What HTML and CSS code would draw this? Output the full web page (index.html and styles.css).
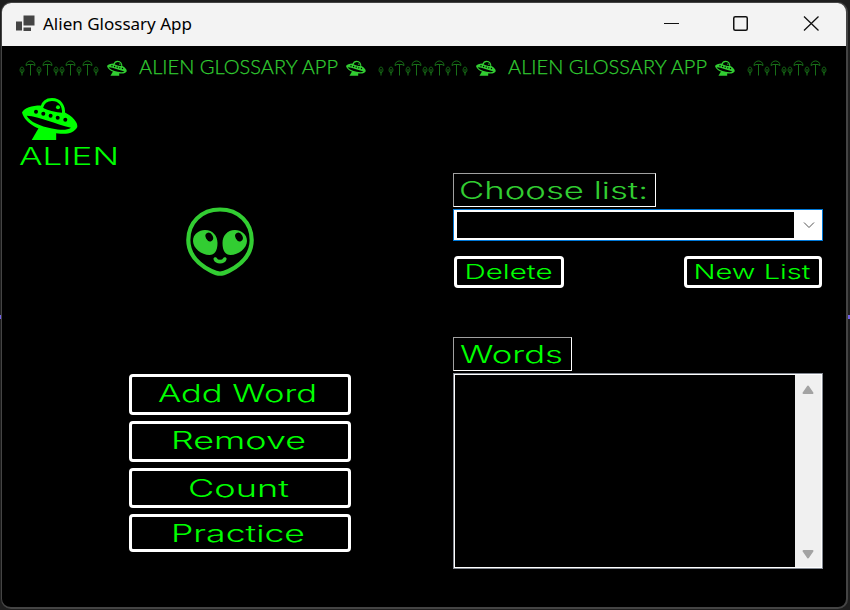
FILE: index.html
```html
<!DOCTYPE html>
<html lang="en">
<head>
<meta charset="utf-8">
<title>Alien Glossary App</title>
<link rel="stylesheet" href="styles.css">
</head>
<body>
<svg class="defs" width="0" height="0">
  <defs>
    <symbol id="ufo" viewBox="0 0 56 43">
      <path d="M17.500 28.500L9.700 42H34.200V33z" fill="currentColor"/>
      <path d="M19.500 10C21 4 25 1.600 30 1.600c8 0 12 6 11.500 14" fill="none" stroke="currentColor" stroke-width="3"/>
      <path d="M0 14.500C2 10 10 7.500 18.500 7.500q2 3 11 5.500t13.500 1.500C50 18 56 24 55.300 29 52 35 46 36.500 36 35.500 18 33 3 26 0 14.500z" fill="currentColor"/>
      <path d="M4.700 17.700C18 18.500 33 26 49 29.800 45 32.500 38 32.200 30 30.500 18 28 8 24 4.700 17.700z" fill="#000"/>
      <g fill="#000"><circle cx="14" cy="13.700" r="2"/><circle cx="21.300" cy="15.700" r="2"/><circle cx="28.600" cy="17.700" r="2"/><circle cx="35.700" cy="19.700" r="2"/><circle cx="43.300" cy="21.700" r="2"/></g>
      <circle cx="36" cy="9.300" r="2" fill="currentColor"/>
    </symbol>
    <symbol id="sprout" viewBox="0 0 6 16"><path d="M3 15.500V9M3 13C0 12 1 7 3 7S6 12 3 13" /></symbol>
    <symbol id="tree" viewBox="0 0 12 16"><path d="M6 15.500V5M1.500 5.500C1.500 -.5 10.500 -.5 10.500 5.500M1.500 5.500l2-1h5l2 1"/></symbol>
    <symbol id="grove" viewBox="0 0 80 16">
      <use href="#sprout" x="0" width="6" height="16"/><use href="#tree" x="5.500" width="12" height="16"/>
      <use href="#sprout" x="17" width="6" height="16"/><use href="#tree" x="22.500" width="12" height="16"/>
      <use href="#sprout" x="34" width="6" height="16"/><use href="#sprout" x="40" width="6" height="16"/>
      <use href="#tree" x="45.500" width="12" height="16"/><use href="#sprout" x="57" width="6" height="16"/>
      <use href="#tree" x="62.500" width="12" height="16"/><use href="#sprout" x="74" width="6" height="16"/>
    </symbol>
  </defs>
</svg>
<div class="window">
  <header class="titlebar">
    <svg class="app-icon" width="19" height="18" viewBox="0 0 19 18" fill="#444"><path d="M7.500 .5h11v10h-11zM0 6.500h6v9H0zM7.500 12.500h7.500v3.500H7.500z"/></svg>
    <svg class="app-title" width="152" height="26"><text x="0" y="18" textLength="149" lengthAdjust="spacingAndGlyphs">Alien Glossary App</text></svg>
    <svg class="controls" width="160" height="20" viewBox="0 0 160 20" fill="none" stroke="#111">
      <path d="M1 10.500h15"/><rect x="70.750" y="3.750" width="13.500" height="13.500" rx="1.500" stroke-width="1.500"/><path d="M141 3.500l14.500 14M155.500 3.500l-14.500 14" stroke-width="1.300"/>
    </svg>
  </header>
  <div class="banner">
    <svg class="grove" width="80" height="16"><use href="#grove"/></svg>
    <svg class="mini" width="20" height="17"><use href="#ufo"/></svg>
    <svg class="headline" width="200" height="25"><text x="0" y="17" textLength="199" lengthAdjust="spacingAndGlyphs">ALIEN GLOSSARY APP</text></svg>
    <svg class="mini after" width="20" height="17"><use href="#ufo"/></svg>
    <svg class="sprout" width="6" height="16"><use href="#sprout"/></svg>
    <svg class="grove" width="80" height="16"><use href="#grove"/></svg>
    <svg class="mini" width="20" height="17"><use href="#ufo"/></svg>
    <svg class="headline" width="200" height="25"><text x="0" y="17" textLength="199" lengthAdjust="spacingAndGlyphs">ALIEN GLOSSARY APP</text></svg>
    <svg class="mini after" width="20" height="17"><use href="#ufo"/></svg>
    <svg class="grove last" width="80" height="16"><use href="#grove"/></svg>
  </div>
  <main class="content">
    <section class="left">
      <div class="logo">
        <svg class="ufo" width="56" height="43"><use href="#ufo"/></svg>
        <svg class="wide logo-name" width="102" height="32"><text x="0" y="23.500" textLength="100" lengthAdjust="spacingAndGlyphs">ALIEN</text></svg>
      </div>
      <svg class="face" width="68" height="69" viewBox="0 0 68 69">
        <path d="M34 2.500C15 2.500 2.300 16 2.300 33c0 17 12 25.500 23 31 5 2.500 7 2.700 8.700 2.700s3.700-.2 8.700-2.700C53.700 58.500 65.700 50 65.700 33 65.700 16 53 2.500 34 2.500z" fill="none" stroke="currentColor" stroke-width="4.200"/>
        <path d="M7 34c0-7 6-11 12-11 8 0 12.500 6 12.500 13 0 8-3 12-8 12-8 0-16.500-7-16.500-14zM61 34c0-7-6-11-12-11-8 0-12.500 6-12.500 13 0 8 3 12 8 12 8 0 16.500-7 16.500-14z" fill="currentColor"/>
        <ellipse cx="23.300" cy="30" rx="3.500" ry="4.500" transform="rotate(-30 23.300 30)"/><ellipse cx="53" cy="30" rx="3.500" ry="4.500" transform="rotate(-30 53 30)"/>
        <path d="M29.300 52c1.500 3.500 8 3.500 9.500 0" fill="none" stroke="currentColor" stroke-width="3.600" stroke-linecap="round"/>
      </svg>
      <div class="actions">
        <button class="btn"><svg class="wide" width="216" height="35"><text x="26" y="25" textLength="159" lengthAdjust="spacingAndGlyphs">Add Word</text></svg></button>
        <button class="btn"><svg class="wide" width="216" height="35"><text x="39" y="24.500" textLength="135" lengthAdjust="spacingAndGlyphs">Remove</text></svg></button>
        <button class="btn count"><svg class="wide" width="216" height="34"><text x="56" y="25.500" textLength="101" lengthAdjust="spacingAndGlyphs">Count</text></svg></button>
        <button class="btn practice"><svg class="wide" width="216" height="32"><text x="39" y="24.500" textLength="134" lengthAdjust="spacingAndGlyphs">Practice</text></svg></button>
      </div>
    </section>
    <section class="right">
      <div class="label choose"><svg class="wide" width="201" height="32"><text x="5" y="24.500" textLength="189" lengthAdjust="spacingAndGlyphs">Choose list:</text></svg></div>
      <div class="combo"><div class="field"></div><svg class="arrow" width="28" height="28" fill="none" stroke="#555"><path d="M10 11.500l5 5 5-5"/></svg></div>
      <div class="list-buttons">
        <button class="btn delete"><svg class="wide small" width="104" height="26"><text x="7.500" y="20" textLength="88" lengthAdjust="spacingAndGlyphs">Delete</text></svg></button>
        <button class="btn new"><svg class="wide small" width="132" height="26"><text x="6.500" y="20" textLength="117" lengthAdjust="spacingAndGlyphs">New List</text></svg></button>
      </div>
      <div class="label words"><svg class="wide" width="117" height="32"><text x="6" y="24.500" textLength="103" lengthAdjust="spacingAndGlyphs">Words</text></svg></div>
      <div class="listbox">
        <div class="items"></div>
        <div class="scrollbar">
          <svg width="12" height="10"><path d="M6 1.500l4.500 6.500h-9z"/></svg>
          <svg width="12" height="10"><path d="M1.500 2h9L6 8.500z"/></svg>
        </div>
      </div>
    </section>
  </main>
</div>
</body>
</html>
```
FILE: styles.css
```css
* { box-sizing: border-box; }
body {
  margin: 0;
  padding: 2px 2px 1px 1px;
  height: 610px;
  overflow: hidden;
  background: linear-gradient(#1e1e1e 315px, #7160e8 315px, #7160e8 319px, #1e1e1e 319px);
}
svg { display: block; flex: none; overflow: visible; }
.defs { position: absolute; }
.window {
  width: 847px;
  height: 607px;
  border: 1px solid #444;
  border-right-width: 2px;
  border-bottom-width: 2px;
  border-radius: 10px;
  overflow: hidden;
  background: #000;
  color: #0f0;
}
.titlebar {
  height: 43px;
  display: flex;
  align-items: center;
  background: #f3f3f3;
}
.app-icon { margin: -2px 8px 0 14px; }
.app-title { font: 17px "Noto Sans", sans-serif; fill: #000; }
.controls { margin-left: 468px; margin-top: -3px; }
.banner {
  height: 44px;
  display: flex;
  align-items: flex-start;
  padding: 11px 0 0 17px;
  color: #32cd32;
}
.grove, .sprout { margin-top: 3px; fill: none; stroke: #187018; stroke-width: 1; }
.mini { margin: 3px 12px 0 8px; }
.mini.after { margin: 3px 12px 0 7px; }
.mini.after + .sprout { margin-right: 4px; }
.headline { font: 300 20px Lato, sans-serif; fill: #32cd32; stroke: #32cd32; stroke-width: .25; }
.content { display: grid; grid-template-columns: 451px 371px; }
.left { padding: 8px 0 0 18px; }
.logo { height: 71px; }
.ufo { margin-left: 2px; }
.face { margin: 38px 0 0 166px; color: #32cd32; }
.actions {
  width: 222px;
  margin: 98px 0 0 109px;
  display: flex;
  flex-direction: column;
  gap: 6px;
}
.wide { font: 300 23.500px Inter, sans-serif; fill: #0f0; }
.wide.small { font-size: 20px; }
.logo-name { margin-left: -1px; }
.btn {
  padding: 0;
  height: 41px;
  border: 3px solid #fff;
  border-radius: 4px;
  background: #000;
}
.btn.count { height: 40px; }
.btn.practice { height: 38px; }
.right { padding-top: 83px; }
.label {
  height: 34px;
  border: 1px solid #fff;
  border-top-color: #a0a0a0;
  border-left-color: #a0a0a0;
}
.choose { width: 203px; }
.choose .wide { fill: #32cd32; }
.combo {
  width: 370px;
  height: 32px;
  margin-top: 2px;
  padding: 2px 0 2px 3px;
  display: flex;
  border: 1px solid #0078d7;
  background: #fff;
}
.field { width: 338px; height: 26px; background: #000; }
.arrow { margin-top: -1px; }
.list-buttons {
  width: 370px;
  margin-top: 15px;
  padding: 0 1px;
  display: flex;
  justify-content: space-between;
}
.list-buttons .btn { height: 32px; }
.delete { width: 110px; }
.new { width: 138px; }
.words { width: 119px; margin-top: 49px; }
.listbox {
  width: 370px;
  height: 196px;
  margin-top: 2px;
  display: flex;
  border: 1px solid #828790;
  background: #fff;
  padding: 1px;
}
.items { flex: 1; background: #000; }
.scrollbar {
  width: 26px;
  display: flex;
  flex-direction: column;
  justify-content: space-between;
  align-items: center;
  padding: 10px 0 8px;
  background: #f0f0f0;
  fill: #a3a3a3;
  stroke: #a3a3a3;
  stroke-linejoin: round;
  stroke-width: 2;
}
```
